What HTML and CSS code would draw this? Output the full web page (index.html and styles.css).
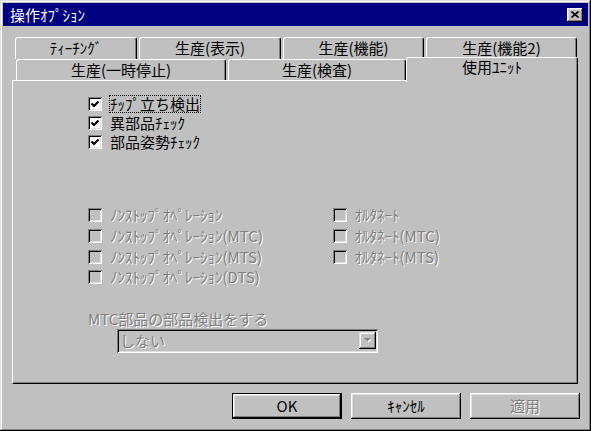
FILE: index.html
```html
<!DOCTYPE html>
<html lang="ja">
<head>
  <meta charset="UTF-8">
  <title>操作ｵﾌﾟｼｮﾝ</title>
  <link rel="stylesheet" href="styles.css">
</head>
<body>
  <div class="window">
    <div class="titlebar">
      <span class="title">操作ｵﾌﾟｼｮﾝ</span>
      <button class="close">
        <svg width="8" height="7" viewBox="0 0 8 7"><path d="M0.5 0.5 L7.5 6.5 M7.5 0.5 L0.5 6.5" stroke="#000" stroke-width="1.6"/></svg>
      </button>
    </div>

    <div class="tabs">
      <div class="tab-row back">
        <div class="tab t-teach">ﾃｨｰﾁﾝｸﾞ</div>
        <div class="tab t-view">生産(表示)</div>
        <div class="tab t-func">生産(機能)</div>
        <div class="tab t-func2">生産(機能2)</div>
      </div>
      <div class="tab-row front">
        <div class="tab t-pause">生産(一時停止)</div>
        <div class="tab t-check">生産(検査)</div>
        <div class="tab active">使用ﾕﾆｯﾄ</div>
      </div>
    </div>

    <div class="panel">
      <div class="checks">
        <div class="check-row">
          <span class="box checked"><svg width="10" height="10" viewBox="0 0 10 10"><polyline points="1.5,4.5 4,7 8.5,2.5" fill="none" stroke="#000" stroke-width="2.2"/></svg></span>
          <span class="label focus">ﾁｯﾌﾟ立ち検出</span>
        </div>
        <div class="check-row">
          <span class="box checked"><svg width="10" height="10" viewBox="0 0 10 10"><polyline points="1.5,4.5 4,7 8.5,2.5" fill="none" stroke="#000" stroke-width="2.2"/></svg></span>
          <span class="label">異部品ﾁｪｯｸ</span>
        </div>
        <div class="check-row">
          <span class="box checked"><svg width="10" height="10" viewBox="0 0 10 10"><polyline points="1.5,4.5 4,7 8.5,2.5" fill="none" stroke="#000" stroke-width="2.2"/></svg></span>
          <span class="label">部品姿勢ﾁｪｯｸ</span>
        </div>
      </div>

      <div class="options">
        <div class="col">
          <div class="opt-row"><span class="box off"></span><span class="label disabled">ﾉﾝｽﾄｯﾌﾟｵﾍﾟﾚｰｼｮﾝ</span></div>
          <div class="opt-row"><span class="box off"></span><span class="label disabled">ﾉﾝｽﾄｯﾌﾟｵﾍﾟﾚｰｼｮﾝ(MTC)</span></div>
          <div class="opt-row"><span class="box off"></span><span class="label disabled">ﾉﾝｽﾄｯﾌﾟｵﾍﾟﾚｰｼｮﾝ(MTS)</span></div>
          <div class="opt-row"><span class="box off"></span><span class="label disabled">ﾉﾝｽﾄｯﾌﾟｵﾍﾟﾚｰｼｮﾝ(DTS)</span></div>
        </div>
        <div class="col">
          <div class="opt-row"><span class="box off"></span><span class="label disabled">ｵﾙﾀﾈｰﾄ</span></div>
          <div class="opt-row"><span class="box off"></span><span class="label disabled">ｵﾙﾀﾈｰﾄ(MTC)</span></div>
          <div class="opt-row"><span class="box off"></span><span class="label disabled">ｵﾙﾀﾈｰﾄ(MTS)</span></div>
        </div>
      </div>

      <div class="field-label disabled">MTC部品の部品検出をする</div>
      <div class="select">
        <span class="select-text disabled">しない</span>
        <span class="select-btn">
          <svg width="7" height="5" viewBox="0 0 7 5"><path d="M1 1 H8 L4.5 4.5 Z" fill="#fff"/><path d="M0 0 H7 L3.5 3.5 Z" fill="#808080"/></svg>
        </span>
      </div>
    </div>

    <div class="buttons">
      <button class="btn default">OK</button>
      <button class="btn">ｷｬﾝｾﾙ</button>
      <button class="btn"><span class="disabled">適用</span></button>
    </div>
  </div>
</body>
</html>
```

FILE: styles.css
```css
* {
  box-sizing: border-box;
}

html,
body {
  margin: 0;
}

body {
  background: #c0c0c0;
  color: #000;
  font-family: "Noto Sans CJK JP", "Noto Sans", sans-serif;
  font-size: 15px;
}

.window {
  width: 591px;
  height: 431px;
  padding: 3px;
  background: #c0c0c0;
  box-shadow: inset -1px -1px #000, inset 1px 1px #dfdfdf, inset -2px -2px #808080, inset 2px 2px #fff;
}

.titlebar {
  display: flex;
  align-items: center;
  justify-content: space-between;
  height: 23px;
  padding: 0 5px 0 7px;
  background: #000080;
  color: #fff;
}

.title {
  line-height: 16px;
}

.close {
  display: flex;
  align-items: center;
  justify-content: center;
  width: 16px;
  height: 14px;
  padding: 0;
  border: 0;
  background: #c0c0c0;
  box-shadow: inset -1px -1px #000, inset 1px 1px #fff, inset -2px -2px #808080, inset 2px 2px #dfdfdf;
}

/* tabs */
.tabs {
  margin: 11px 0 0 9px;
}

.tab-row {
  display: flex;
  height: 22px;
}

.tab-row.back {
  gap: 2px;
  margin-left: 3px;
}

.tab-row.front {
  height: 21px;
  margin-left: 4px;
}

.tab {
  height: 100%;
  border-top: 1px solid #fff;
  border-left: 1px solid #fff;
  border-right: 1px solid #000;
  border-radius: 3px 3px 0 0;
  box-shadow: inset -1px 0 #808080;
  background: #c0c0c0;
  text-align: center;
  line-height: 20px;
  white-space: nowrap;
}

.t-teach { width: 122px; }
.t-view { width: 142px; }
.t-func { width: 141px; }
.t-func2 { width: 151px; }
.t-pause { width: 210px; margin-right: 2px; }
.t-check { width: 178px; }

.tab.active {
  position: relative;
  z-index: 1;
  width: 172px;
  height: 25px;
  margin-top: -2px;
  line-height: 18px;
}

/* panel */
.panel {
  width: 566px;
  height: 304px;
  margin-left: 9px;
  padding: 13px 0 0 75px;
  border-top: 1px solid #fff;
  border-left: 1px solid #fff;
  border-right: 1px solid #000;
  border-bottom: 1px solid #000;
  box-shadow: inset -1px -1px #808080;
}

.check-row {
  display: flex;
  align-items: center;
  height: 19px;
}

.box {
  display: flex;
  align-items: center;
  justify-content: center;
  flex: none;
  width: 14px;
  height: 14px;
  margin-right: 8px;
  background: #fff;
  box-shadow: inset 1px 1px #808080, inset -1px -1px #fff, inset 2px 2px #000, inset -2px -2px #dfdfdf;
}

.box.off {
  background: #c0c0c0;
}

.label {
  line-height: 16px;
  white-space: nowrap;
}

.label.focus {
  outline: 1px dotted #000;
}

.disabled {
  color: #808080;
  text-shadow: 1px 1px 0 #fff;
}

.options {
  display: flex;
  margin-top: 54px;
}

.options .col {
  width: 250px;
}

.opt-row {
  display: flex;
  align-items: center;
  height: 20.67px;
}

.field-label {
  margin-top: 22px;
  line-height: 18px;
}

.select {
  display: flex;
  align-items: center;
  justify-content: space-between;
  width: 261px;
  height: 24px;
  margin: 1px 0 0 29px;
  padding: 0 2px 0 3px;
  background: #c0c0c0;
  box-shadow: inset 1px 1px #808080, inset -1px -1px #fff, inset 2px 2px #000, inset -2px -2px #dfdfdf;
}

.select-text {
  line-height: 18px;
}

.select-btn {
  display: flex;
  align-items: center;
  justify-content: center;
  width: 17px;
  height: 17px;
  box-shadow: inset -1px -1px #000, inset 1px 1px #dfdfdf, inset -2px -2px #808080, inset 2px 2px #fff;
}

/* bottom buttons */
.buttons {
  display: flex;
  justify-content: flex-end;
  gap: 9px;
  margin-top: 9px;
  padding-right: 8px;
}

.btn {
  width: 110px;
  height: 26px;
  padding: 0;
  border: 0;
  background: #c0c0c0;
  color: #000;
  font: inherit;
  line-height: 20px;
  box-shadow: inset -1px -1px #000, inset 1px 1px #fff, inset -2px -2px #808080, inset 2px 2px #dfdfdf;
}

.btn.default {
  border: 1px solid #000;
}
```
